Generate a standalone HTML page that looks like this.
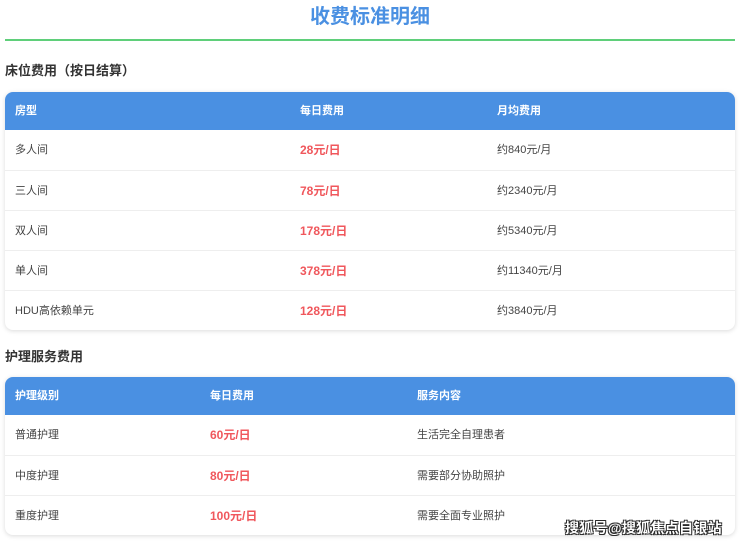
<!DOCTYPE html><html><head><meta charset="utf-8"><style>
body{margin:0;width:740px;height:543px;overflow:hidden;background:#fff;font-family:"Liberation Sans","Noto Sans CJK SC",sans-serif;position:relative}
.t{position:absolute;left:0;width:740px;top:3px;text-align:center;font-size:20px;font-weight:bold;color:#4a90e2;line-height:28px}
.line{position:absolute;left:5px;width:730px;top:39px;height:2px;background:#5fcf7a}
.h{position:absolute;left:5px;font-size:13px;font-weight:bold;color:#333}
.tb{position:absolute;left:5px;width:730px;border-radius:8px;overflow:hidden;box-shadow:0 1px 5px rgba(0,0,0,.15);background:#fff}
.r{position:relative;height:40px;border-top:1px solid #eee;box-sizing:border-box;font-size:11px;color:#444}
.r span{position:absolute;top:0;line-height:40px}
.hd{height:38px;background:#4a90e2;color:#fff;font-weight:bold;border:0}
.hd span{line-height:38px}
.p{color:#f0575c;font-weight:bold;font-size:12px}
.wm{position:absolute;left:565px;top:518px;font-size:14px;color:#fff;font-weight:bold;letter-spacing:0.3px;text-shadow:0 0 1px #000,1px 1px 0 #333,-1px -1px 0 #333,1px -1px 0 #333,-1px 1px 0 #333}
</style></head><body>
<div class="t">收费标准明细</div><div class="line"></div>
<div class="h" style="top:60px">床位费用（按日结算）</div>
<div class="tb" style="top:92px">
<div class="r hd"><span style="left:10px">房型</span><span style="left:295px">每日费用</span><span style="left:492px">月均费用</span></div>
<div class="r" style="border:0"><span style="left:10px">多人间</span><span class="p" style="left:295px">28元/日</span><span style="left:492px">约840元/月</span></div>
<div class="r"><span style="left:10px">三人间</span><span class="p" style="left:295px">78元/日</span><span style="left:492px">约2340元/月</span></div>
<div class="r"><span style="left:10px">双人间</span><span class="p" style="left:295px">178元/日</span><span style="left:492px">约5340元/月</span></div>
<div class="r"><span style="left:10px">单人间</span><span class="p" style="left:295px">378元/日</span><span style="left:492px">约11340元/月</span></div>
<div class="r"><span style="left:10px">HDU高依赖单元</span><span class="p" style="left:295px">128元/日</span><span style="left:492px">约3840元/月</span></div>
</div>
<div class="h" style="top:346px">护理服务费用</div>
<div class="tb" style="top:377px;height:158px">
<div class="r hd"><span style="left:10px">护理级别</span><span style="left:205px">每日费用</span><span style="left:412px">服务内容</span></div>
<div class="r" style="border:0"><span style="left:10px">普通护理</span><span class="p" style="left:205px">60元/日</span><span style="left:412px">生活完全自理患者</span></div>
<div class="r"><span style="left:10px">中度护理</span><span class="p" style="left:205px">80元/日</span><span style="left:412px">需要部分协助照护</span></div>
<div class="r"><span style="left:10px">重度护理</span><span class="p" style="left:205px">100元/日</span><span style="left:412px">需要全面专业照护</span></div>
</div>
<div class="wm">搜狐号@搜狐焦点自银站</div>
</body></html>
